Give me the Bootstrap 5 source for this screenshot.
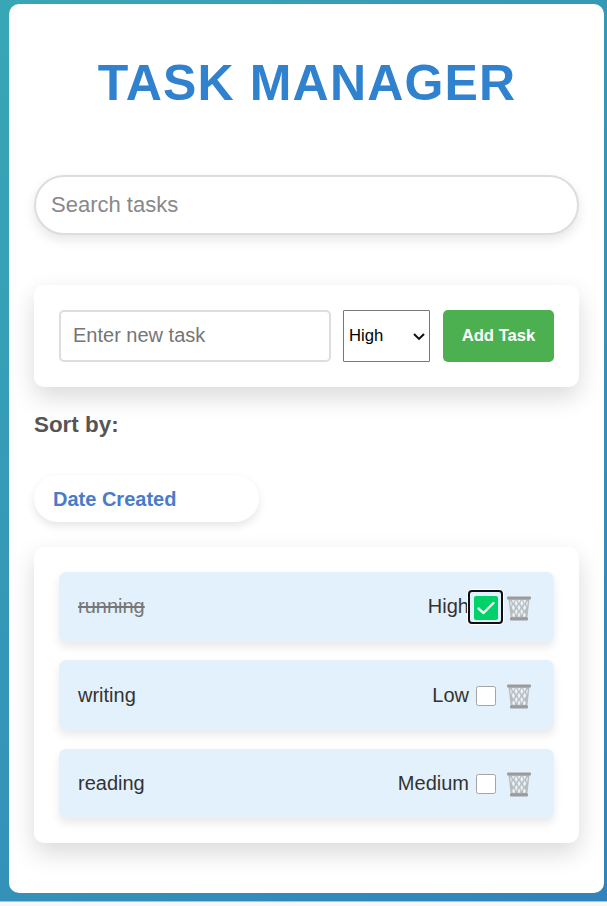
<!DOCTYPE html>
<html lang="en">
<head>
<meta charset="utf-8">
<meta name="viewport" content="width=device-width, initial-scale=1">
<title>Task Manager</title>
<link href="https://cdn.jsdelivr.net/npm/bootstrap@5.3.0/dist/css/bootstrap.min.css" rel="stylesheet">
<style>
body{font-family:"Liberation Sans",Arial,sans-serif;background:#f7f7f7;overflow:hidden;color:#333}
.page-bg{height:902px;padding:4px 3px 9px 9px;background:linear-gradient(135deg,#38a7b4,#3183bc);border-bottom:1px solid #b5bec3}
.panel{height:889px;border-radius:10px;padding:53px 25px 0}
.title{font-size:50px;line-height:52px;letter-spacing:1.15px;color:#3182ce;margin-bottom:66px;padding-left:1px}
.form-control::placeholder{color:#757575;opacity:1}
.search-box{height:60px;border:2px solid #ddd;border-radius:31px;padding:0 15px;font-size:22px;box-shadow:0 5px 12px rgba(0,0,0,.1);margin-bottom:50px}
.search-box::placeholder{color:#888}
.panel-box{border-radius:10px;padding:25px;box-shadow:0 10px 25px rgba(0,0,0,.15)}
.task-form{height:102px;margin-bottom:25px}
.task-input{width:272px;height:52px;border:2px solid #ddd;border-radius:5px;padding:0 12px 2px;font-size:20px;margin-right:12px}
.priority-wrap{width:87px;height:52px;margin-right:13px}
.priority{appearance:none;width:100%;height:100%;border:1px solid #767676;border-radius:1px;padding:0 6px 2px 5px;font-size:16.67px;background:#fff;color:#000}
.priority-wrap svg{right:5px;top:22px}
.btn-add{width:111px;height:52px;border-radius:5px;background:#4caf50;color:#fff;font-size:16.67px;padding:0 0 2px}
.sort-label{font-size:22.4px;line-height:26px;color:#555;margin-bottom:37px}
.sort-pill{width:225px;height:47px;border-radius:25px;padding-left:19px;font-size:20px;color:#4a7bc8;box-shadow:0 4px 8px rgba(0,0,0,.1);margin-bottom:25px}
.task-list{height:296px;display:grid;grid-template-rows:70px 70px 69px;row-gap:18.4px}
.task{background:#e3f1fc;border-radius:7px;padding:0 23px 2px 19px;font-size:20px;box-shadow:0 5px 10px rgba(0,0,0,.09)}
.task-open{padding-bottom:0}
.done-name{color:#777}
.check-btn{width:35px;height:34px;margin:1px 4px 0 -1px;border:2px solid #101010;border-radius:4px;box-shadow:0 0 0 1px #fff;background:#e3f1fc}
.check-btn svg{margin-top:2px}
.open-box{width:20px;height:20px;border:1px solid #a5a5a5;border-radius:2.5px;margin:2px 11px 0 7px;background:#fff}
.bin{margin-top:4px}
.task-open .bin{margin-top:2px}
</style>
<script src="https://cdn.jsdelivr.net/npm/bootstrap@5.3.0/dist/js/bootstrap.bundle.min.js"></script>
</head>
<body>
<svg width="0" height="0" class="position-absolute" aria-hidden="true">
  <symbol id="bin" viewBox="0 0 24 25">
    <path d="M1.5 3 3.7 22H20.3L22.5 3Z" fill="#b9bcbe"/>
    <g fill="#e8f3fc" stroke="#e8f3fc" stroke-width=".35">
      <path d="M5 4h2.6L6.3 6.8ZM10.7 4h2.6L12 6.8ZM16.4 4h2.6l-1.3 2.8Z"/>
      <path d="M9.1 4.4 10.6 7.3 9.3 10.2 7.6 7.3ZM14.9 4.4 16.4 7.3 14.7 10.2 13.4 7.3ZM3.3 5.3 4.8 7.6 4 9.8ZM20.7 5.3 19.2 7.6 20 9.8Z"/>
      <path d="M6.2 8.8 7.8 11.7 6.6 14.4 4.9 11.7ZM12 8.8 13.4 11.7 12 14.4 10.6 11.7ZM17.8 8.8 19.1 11.7 17.4 14.4 16.2 11.7Z"/>
      <path d="M9.3 12.9 10.6 15.7 9.4 18.4 8 15.7ZM14.7 12.9 16 15.7 14.6 18.4 13.4 15.7Z"/>
      <path d="M6.7 16.6 7.9 18.8 7.2 21H6.3L5.3 18.8ZM12 16.6 13.2 18.8 12.4 21h-.8L10.8 18.8ZM17.3 16.6 18.7 18.8 17.7 21H16.8L16.1 18.8Z"/>
    </g>
    <rect x="0" y=".5" width="24" height="3" rx="1" fill="#9b9b9b"/>
    <rect x="3" y="21.2" width="18" height="3.2" rx="1" fill="#9b9b9b"/>
  </symbol>
</svg>
<div class="page-bg">
  <main class="panel bg-white">
    <h1 class="title fw-bold text-center">TASK MANAGER</h1>
    <input class="form-control search-box" type="text" placeholder="Search tasks">
    <form class="panel-box task-form d-flex bg-white">
      <input class="form-control task-input flex-shrink-0" type="text" placeholder="Enter new task">
      <div class="priority-wrap position-relative flex-shrink-0">
        <select class="priority"><option>High</option><option>Medium</option><option>Low</option></select>
        <svg class="position-absolute pe-none" width="12" height="9" viewBox="0 0 12 9"><path d="M1 2 6 6.9 11 2" fill="none" stroke="#101010" stroke-width="2.1"/></svg>
      </div>
      <button class="btn btn-add fw-bold flex-shrink-0" type="button">Add Task</button>
    </form>
    <div class="sort-label fw-bold">Sort by:</div>
    <div class="sort-pill d-flex align-items-center bg-white fw-bold">Date Created</div>
    <section class="panel-box task-list bg-white">
      <div class="task d-flex align-items-center">
        <span class="done-name text-decoration-line-through me-auto">running</span>
        <span>High</span>
        <span class="check-btn d-flex align-items-center justify-content-center">
          <svg width="24" height="24" viewBox="0 0 24 24"><rect width="24" height="24" rx="2" fill="#00d26a"/><path d="M4.5 12.5 9.5 17 19.5 7" fill="none" stroke="#f4f4f4" stroke-width="2.4" stroke-linecap="round" stroke-linejoin="round"/></svg>
        </span>
        <svg class="bin" width="24" height="25"><use href="#bin"/></svg>
      </div>
      <div class="task task-open d-flex align-items-center">
        <span class="me-auto">writing</span>
        <span>Low</span>
        <span class="open-box"></span>
        <svg class="bin" width="24" height="25"><use href="#bin"/></svg>
      </div>
      <div class="task task-open d-flex align-items-center">
        <span class="me-auto">reading</span>
        <span>Medium</span>
        <span class="open-box"></span>
        <svg class="bin" width="24" height="25"><use href="#bin"/></svg>
      </div>
    </section>
  </main>
</div>
</body>
</html>
